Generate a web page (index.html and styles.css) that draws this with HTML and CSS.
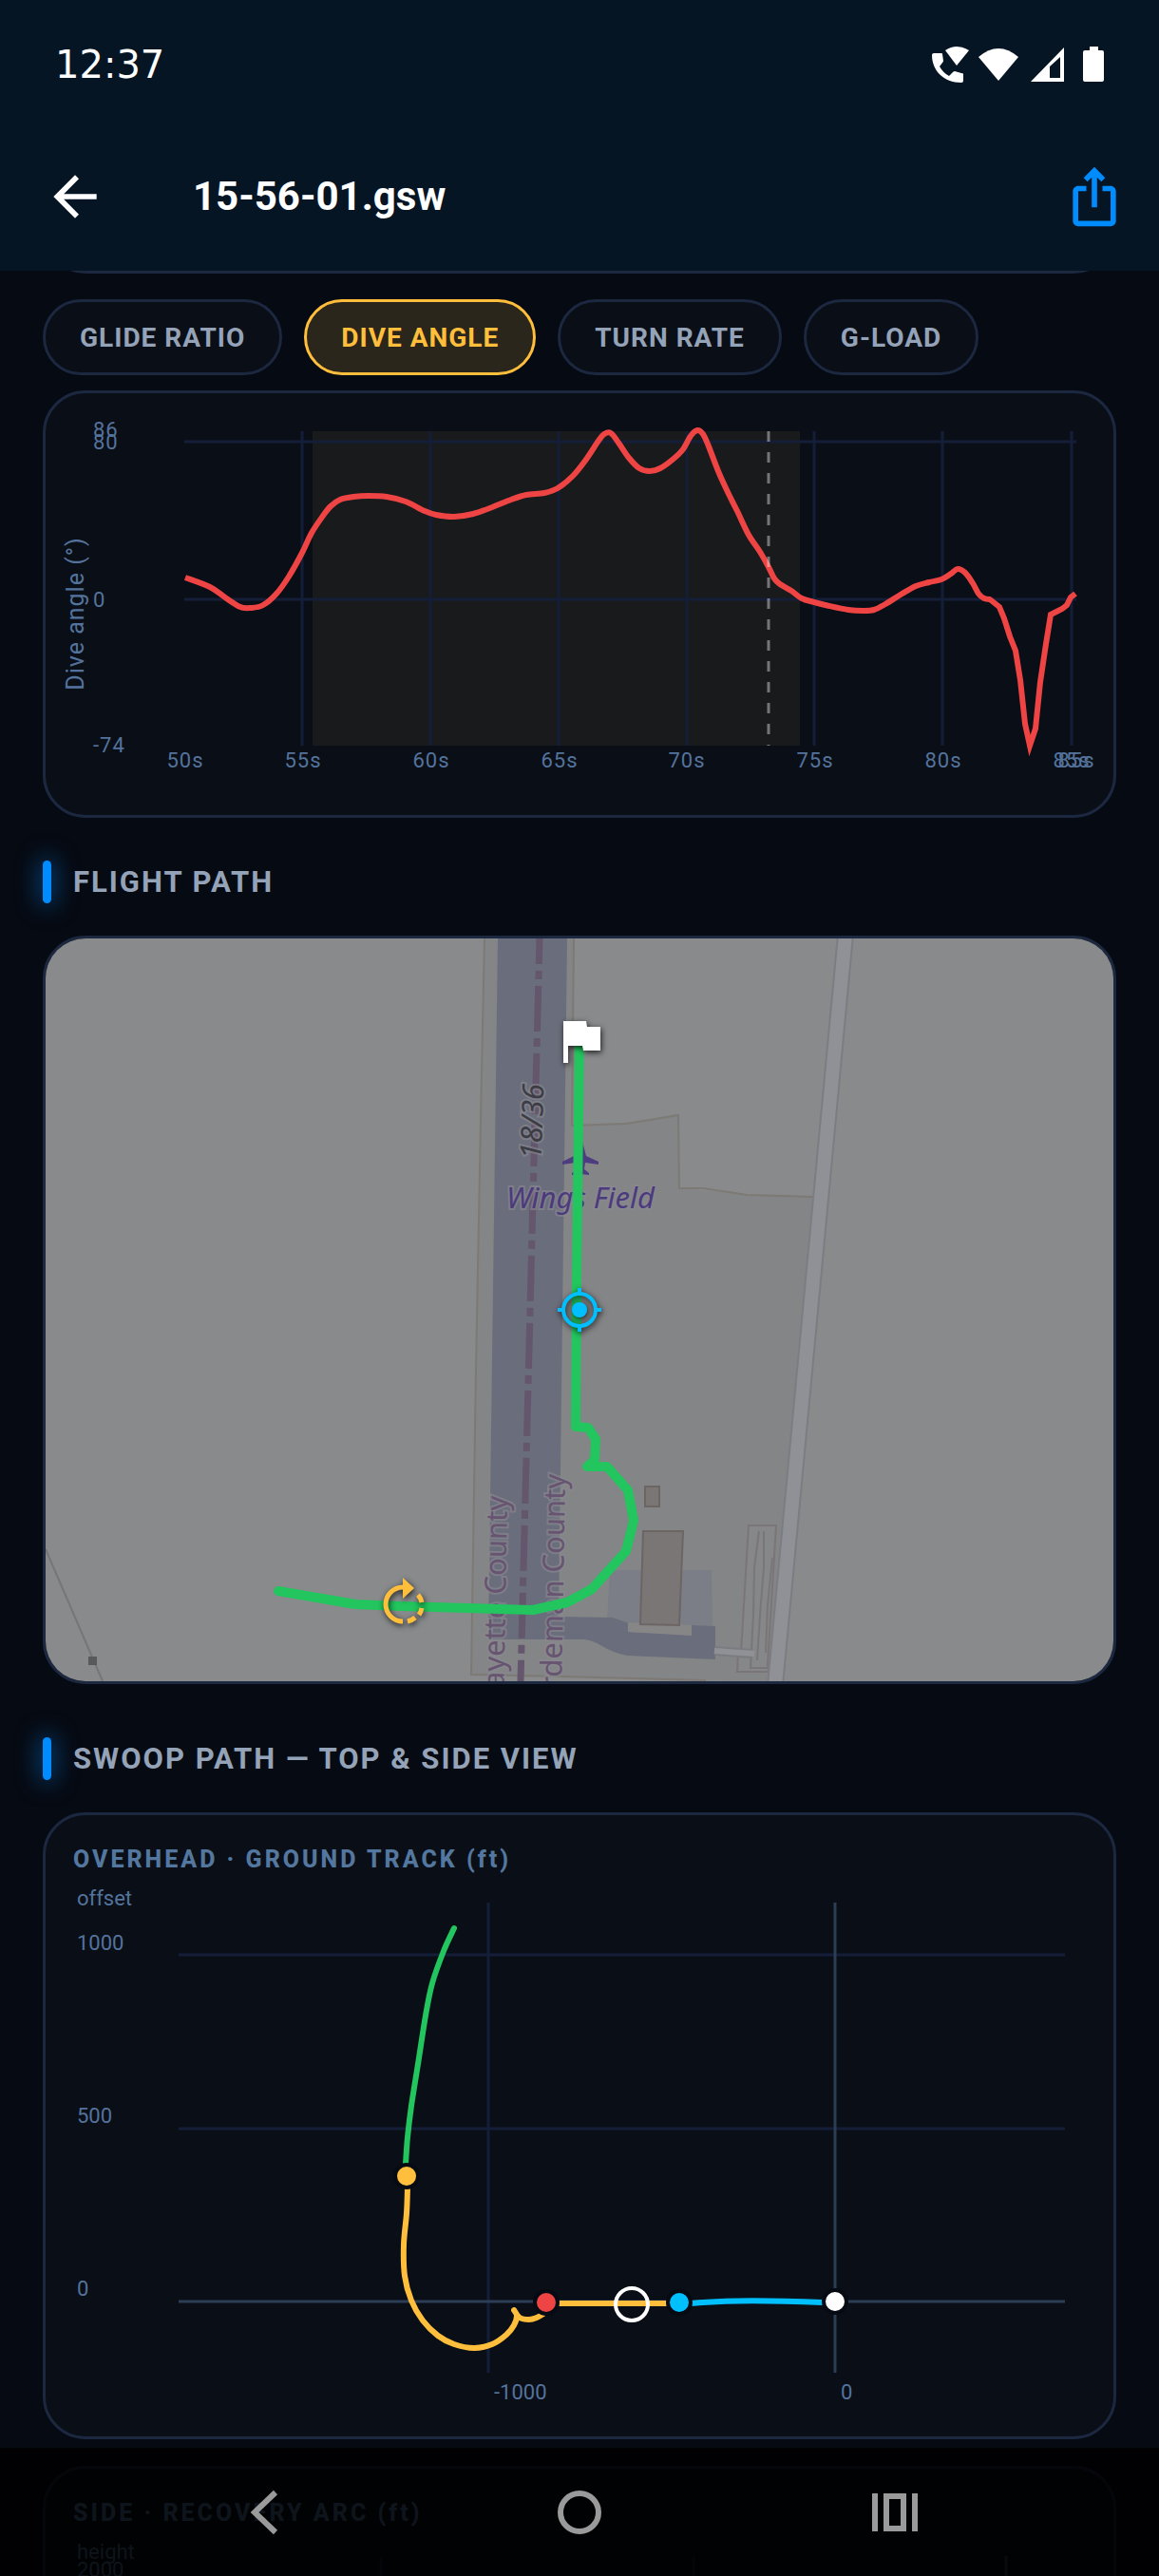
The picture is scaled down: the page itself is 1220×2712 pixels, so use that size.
FILE: index.html
```html
<!DOCTYPE html>
<html lang="en">

<head>
    <meta charset="UTF-8">
    <meta name="viewport" content="width=device-width, initial-scale=1.0">
    <title>15-56-01.gsw</title>
    <link rel="stylesheet" href="styles.css">
</head>

<body>
<div class="app">
    <header class="header">
        <div class="status-bar">
            <span class="clock">12:37</span>
            <svg class="status-icons" viewBox="0 0 184 44" aria-hidden="true">
                <path d="M4 10h8q1 0 1 1l1 7q0 1-1 2l-3 4q4 7 10 10l4-4q1-1 2-1l7 2q2 0 2 1v7q0 2-2 2C14 41 2 28 2 12q0-2 2-2z"/>
                <path d="M28 23L16 7q12-8 25 0z"/>
                <path d="M72 39L51 14q21-18 42 0z"/>
                <path d="M106 40L141 4v36zM126 24v12h11V14z" fill-rule="evenodd"/>
                <path d="M168 3h9v4h4q2 0 2 2v29q0 2-2 2h-18q-2 0-2-2V9q0-2 2-2h5z"/>
            </svg>
        </div>
        <div class="app-bar">
            <button type="button" class="icon-btn" aria-label="Back">
                <svg viewBox="0 0 24 24"><path d="M20 11H7.83l5.59-5.59L12 4l-8 8 8 8 1.41-1.41L7.83 13H20v-2z"/></svg>
            </button>
            <h1 class="page-title">15-56-01.gsw</h1>
            <button type="button" class="icon-btn share" aria-label="Share">
                <svg viewBox="0 0 24 24"><path d="M16 5l-1.42 1.42-1.59-1.59V16h-1.98V4.83L9.42 6.42 8 5l4-4 4 4zm4 5v11c0 1.1-.9 2-2 2H6c-1.11 0-2-.9-2-2V10c0-1.11.89-2 2-2h3v2H6v11h12V10h-3V8h3c1.1 0 2 .89 2 2z"/></svg>
            </button>
        </div>
    </header>

    <main class="content">
        <div class="card card-prev"></div>

        <div class="chips">
            <button type="button" class="chip">GLIDE RATIO</button>
            <button type="button" class="chip active">DIVE ANGLE</button>
            <button type="button" class="chip">TURN RATE</button>
            <button type="button" class="chip">G-LOAD</button>
        </div>

        <div class="card">
            <svg class="chart chart-time" viewBox="48 414 1124 444" role="img" aria-label="Dive angle over time">
                <rect class="swoop-band" x="329" y="454" width="513" height="331"/>
                <path class="grid" d="M194 465H1133M194 631H1133M318 454V785M453 454V785M588 454V785M723 454V785M857 454V785M992 454V785M1128 454V785"/>
                <polyline class="curve red smooth" points="195,608 221,618 237,629 253,639 264,640 277,637 291,625 304,607 318,582 328,561 340,543 348,533 358,526 372,523 388,522 407,523 427,528 447,538 459,542 478,544 498,541 518,534 538,526 554,521 573,519 587,514 603,501 616,485 630,464 636,457 643,456 651,466 662,482 673,493 684,496 695,493 709,483 719,473 727,459 734,453 740,457 746,470 756,496 766,518 776,538 788,563 800,581 809,597 815,609 821,615 833,622 844,630 857,634 873,638 893,642 908,643 920,642 932,636 948,626 964,617 978,613 991,610 1001,604 1008,599 1016,603 1024,614 1030,625 1036,630 1043,631"/>
                <polyline class="curve red" points="1042,631 1052,639 1057,651 1063,670 1069,685 1074,716 1079,762 1084,785 1090,767 1095,718 1101,678 1106,647 1112,644 1118,641 1123,637 1127,629 1132,625"/>
                <path class="cursor" d="M809 454V785"/>
                <g class="labels">
                    <text x="98" y="460">86</text>
                    <text x="98" y="473">80</text>
                    <text x="98" y="639">0</text>
                    <text x="98" y="792">-74</text>
                </g>
                <g class="labels middle">
                    <text x="195" y="808">50s</text>
                    <text x="319" y="808">55s</text>
                    <text x="454" y="808">60s</text>
                    <text x="589" y="808">65s</text>
                    <text x="723" y="808">70s</text>
                    <text x="858" y="808">75s</text>
                    <text x="993" y="808">80s</text>
                    <text x="1128" y="808">85s</text>
                    <text x="1133" y="808">85s</text>
                </g>
                <text class="axis-title" transform="translate(88 646) rotate(-90)">Dive angle (°)</text>
            </svg>
        </div>

        <h2 class="section-title">FLIGHT PATH</h2>

        <div class="card card-map">
            <svg class="chart" viewBox="48 988 1124 782" role="img" aria-label="Flight path map">
                <rect x="48" y="988" width="1124" height="782" fill="#888a8b"/>
                <path d="M510 988L507 1127L501 1441L496 1763L743 1769L817 1770L837 1550L855 1260L786 1258L715 1251L714 1174L659 1183L603 1185L604 988z" fill="#848586"/>
                <path class="parcel" d="M510 988L507 1127L501 1441L496 1763L590 1765L743 1769M604 988L602 1185L659 1183L690 1178L714 1174L715 1251L740 1251L786 1258L855 1260"/>
                <path d="M642 1653H749L750 1712L639 1707z" fill="#7b7d87"/>
                <path d="M524 988H597L588 1702L645 1703L662 1709L661 1718L728 1721V1711L753 1712V1747L660 1743Q645 1740 632 1732Q624 1727 615 1726H514z" fill="#6a6d7b"/>
                <path d="M661 1709L728 1711V1722L661 1718z" fill="#868686"/>
                <path d="M568 988L548 1770" fill="none" stroke="#64566c" stroke-width="7" stroke-dasharray="48 7 9 7" stroke-dashoffset="21"/>

                <!-- buildings and parking -->
                <path class="building" d="M677 1612H719L715 1711L674 1710z"/>
                <path class="building" d="M679 1565H694V1586H679z"/>
                <path d="M788 1606H817L808 1752L809 1760H776L777 1740H780z" fill="#868789" stroke="#7c7577" stroke-width="2"/>
                <path class="aisle" d="M799 1612L794 1650L793 1700L790 1756H812M804 1612V1650L800 1700L797 1748M813 1640L808 1690L806 1740"/>
                <path d="M752 1738L792 1741" fill="none" stroke="#7b7c82" stroke-width="10"/>
                <path d="M752 1738L794 1741" fill="none" stroke="#8f9195" stroke-width="6"/>
                <path d="M890 984L861 1294L837 1550L816 1774" fill="none" stroke="#7c7d83" stroke-width="18"/>
                <path d="M890 984L861 1294L837 1550L816 1774" fill="none" stroke="#8f9197" stroke-width="14"/>
                <path d="M48 1631L108 1770" fill="none" stroke="#757677" stroke-width="2"/>
                <rect x="93" y="1744" width="9" height="9" fill="#58595b"/>

                <path d="M613 1202L617 1217L630 1223V1226L616 1224L615 1231L620 1235V1237L611 1236L602 1237V1235L607 1231L606 1224L592 1226V1223L606 1216L609 1202z" fill="#4d3c80"/>
                <text class="map-text airfield" x="611" y="1272">Wings Field</text>
                <text class="map-text runway" transform="translate(571 1181) rotate(-88)">18/36</text>
                <text class="map-text county" transform="translate(534 1575) rotate(-89)">Fayette County</text>
                <text class="map-text county" transform="translate(595 1552) rotate(-89)">Hardeman County</text>

                <path class="track" d="M610 1090L607 1350L606 1502L619 1503L627 1515L626 1537L618 1544H639L661 1569L667 1601L659 1633L623 1673L597 1687L561 1695L423 1691L374 1689L293 1675"/>

                <g class="marker">
                    <path d="M593 1075H617L618 1081H632V1106H614L613 1101H598V1119H593z" fill="#fff"/>
                </g>
                <g class="marker" fill="none" stroke="#00bfff" stroke-width="4">
                    <circle cx="610" cy="1379" r="17"/>
                    <path d="M610 1356v6M610 1396v6M587 1379h6M627 1379h6"/>
                    <circle cx="610" cy="1379" r="8" fill="#00bfff" stroke="none"/>
                </g>
                <g class="marker" fill="none" stroke="#ffbf3c" stroke-width="5">
                    <path d="M424 1671A18 18 0 0 0 424 1707"/>
                    <path d="M440 1679A18 18 0 0 1 444 1687M444 1693A18 18 0 0 1 441 1700M437 1703A18 18 0 0 1 429 1707"/>
                    <path d="M424 1661L436 1672L424 1683z" fill="#ffbf3c" stroke="none"/>
                </g>
            </svg>
        </div>

        <h2 class="section-title">SWOOP PATH — TOP &amp; SIDE VIEW</h2>

        <div class="card card-view">
            <h3 class="card-title">OVERHEAD · GROUND TRACK (ft)</h3>
            <svg class="chart" viewBox="48 1973 1124 592" role="img" aria-label="Overhead ground track">
                <path class="grid" d="M188 2058H1121M188 2241H1121M514 2003V2498"/>
                <path class="axis" d="M188 2423H1121M879 2003V2498"/>
                <g class="labels plain">
                    <text x="81" y="2006">offset</text>
                    <text x="81" y="2053">1000</text>
                    <text x="81" y="2235">500</text>
                    <text x="81" y="2417">0</text>
                    <text x="520" y="2526">-1000</text>
                    <text x="885" y="2526">0</text>
                </g>
                <polyline class="curve green smooth" points="478,2030 467,2054 455,2088 448,2122 440,2173 433,2217 429,2250 427,2278"/>
                <polyline class="curve yellow smooth" points="429,2303 428,2330 425,2363 426,2396 433,2422 445,2443 461,2459 478,2468 499,2472 518,2468 533,2458 541,2448 544,2438 541,2432 547,2440 557,2442 565,2440 572,2436"/>
                <path class="curve yellow flat" d="M588 2425H702"/>
                <path class="curve blue flat" d="M728 2425Q772 2420 866 2424"/>
                <g class="points">
                    <circle cx="428" cy="2291" r="12" fill="#ffbf3c"/>
                    <circle cx="575" cy="2424" r="12" fill="#ef4444"/>
                    <circle cx="715" cy="2424" r="12" fill="#00bfff"/>
                    <circle cx="879" cy="2423" r="12" fill="#fff"/>
                </g>
                <circle cx="665" cy="2426" r="17" fill="none" stroke="#fff" stroke-width="4"/>
            </svg>
        </div>

        <div class="card card-view">
            <h3 class="card-title">SIDE · RECOVERY ARC (ft)</h3>
            <svg class="chart" viewBox="48 2662 1124 592" role="img" aria-label="Side recovery arc">
                <path class="grid" d="M401 2692V3187M730 2692V3187"/>
                <path class="axis" d="M1059 2692V3187"/>
                <g class="labels plain">
                    <text x="81" y="2695">height</text>
                    <text x="81" y="2714">2000</text>
                </g>
            </svg>
        </div>
    </main>

    <nav class="nav-bar">
        <button type="button" aria-label="Back"><svg viewBox="0 0 52 52"><path d="M38 5L16 26L38 47"/></svg></button>
        <button type="button" aria-label="Home"><svg viewBox="0 0 52 52"><circle cx="26" cy="26" r="20"/></svg></button>
        <button type="button" aria-label="Recent apps"><svg viewBox="0 0 52 52"><path d="M5 6V46M47 6V46M17 9H35V43H17z"/></svg></button>
    </nav>
</div>

<script>
    // turn the sampled polylines into smooth curves
    document.querySelectorAll('polyline.smooth').forEach(line => {
        const p = line.getAttribute('points').trim().split(/\s+/).map(s => s.split(',').map(Number));
        let d = `M${p[0]}`;

        for (let i = 0; i < p.length - 1; i++) {
            const a = p[i - 1] || p[i];
            const b = p[i];
            const c = p[i + 1];
            const e = p[i + 2] || c;
            d += `C${b[0] + (c[0] - a[0]) / 6},${b[1] + (c[1] - a[1]) / 6} ${c[0] - (e[0] - b[0]) / 6},${c[1] - (e[1] - b[1]) / 6} ${c}`;
        }

        const path = document.createElementNS('http://www.w3.org/2000/svg', 'path');
        path.setAttribute('class', line.getAttribute('class'));
        path.setAttribute('d', d);
        line.replaceWith(path);
    });
</script>
</body>

</html>
```

FILE: styles.css
```css
* {
    box-sizing: border-box;
}

body {
    margin: 0;
    background: #060a12;
    font-family: Roboto, "Liberation Sans", sans-serif;
    color: #fff;
}

h1, h2, h3 {
    margin: 0;
}

button {
    font-family: inherit;
    cursor: pointer;
}

.app {
    position: relative;
    display: flex;
    flex-direction: column;
    height: 100vh;
    overflow: hidden;
}

.header {
    flex: none;
    background: #051524;
}

.status-bar {
    display: flex;
    align-items: center;
    justify-content: space-between;
    height: 128px;
    padding: 8px 57px 0 58px;
}

.clock {
    font-family: "DejaVu Sans", sans-serif;
    font-size: 40px;
}

.status-icons {
    width: 184px;
    height: 44px;
    fill: #fff;
}

.app-bar {
    display: flex;
    align-items: center;
    height: 157px;
    padding: 0 34px 0 45px;
}

.icon-btn {
    display: flex;
    padding: 0;
    border: none;
    background: none;
    color: #fff;
}

.icon-btn svg {
    width: 68px;
    height: 68px;
    fill: currentColor;
}

.icon-btn.share {
    color: #008cff;
}

.page-title {
    flex: 1;
    padding-left: 90px;
    font-size: 42px;
    font-weight: 700;
}

.content {
    flex: 1;
    min-height: 0;
    overflow: hidden;
    padding: 0 45px;
}

.card {
    border: 3px solid #1c2740;
    border-radius: 45px;
    background: #0a0e17;
    overflow: hidden;
}

.card-prev {
    height: 100px;
    margin-top: -97px;
}

.chips {
    display: flex;
    gap: 23px;
    margin: 27px 0 16px;
}

.chip {
    height: 80px;
    padding: 0 36px;
    border: 3px solid #1c2740;
    border-radius: 40px;
    background: #0a0e17;
    color: #94a3b8;
    font-size: 28px;
    font-weight: 700;
    letter-spacing: 1px;
}

.chip.active {
    border-color: #ffbf3c;
    background: #2b261b;
    color: #ffbf3c;
}

.section-title {
    display: flex;
    align-items: center;
    gap: 23px;
    margin: 45px 0 34px;
    color: #94a3b8;
    font-size: 31px;
    line-height: 45px;
    font-weight: 700;
    letter-spacing: 2px;
}

.section-title::before {
    content: "";
    width: 9px;
    height: 45px;
    border-radius: 5px;
    background: #008cff;
    box-shadow: 0 0 24px 3px rgba(0, 140, 255, 0.5);
}

.card-map {
    margin-bottom: 56px;
}

.card-view {
    margin-bottom: 28px;
}

.card-title {
    padding: 32px 29px 0;
    color: #54779f;
    font-size: 25px;
    line-height: 30px;
    font-weight: 800;
    letter-spacing: 3px;
}

/* charts */

.chart {
    display: block;
    width: 100%;
    height: auto;
}

.swoop-band {
    fill: #191a1b;
}

.grid {
    fill: none;
    stroke: #141e38;
    stroke-width: 3;
}

.axis {
    fill: none;
    stroke: #2c3d56;
    stroke-width: 3;
}

.cursor {
    stroke: rgba(255, 255, 255, 0.4);
    stroke-width: 3;
    stroke-dasharray: 11 11;
}

.curve {
    fill: none;
    stroke-width: 6;
    stroke-linecap: round;
    stroke-linejoin: round;
}

.curve.flat {
    stroke-linecap: butt;
}

.curve.red {
    stroke: #ef4444;
    stroke-linecap: butt;
    stroke-linejoin: miter;
}

.green {
    stroke: #22c55e;
}

.yellow {
    stroke: #ffbf3c;
}

.blue {
    stroke: #00bfff;
}

.points circle {
    stroke: #060a12;
    stroke-width: 4;
}

.labels {
    fill: #54739c;
    font-size: 22px;
    letter-spacing: 1px;
}

.labels.plain {
    letter-spacing: 0;
}

.labels.middle {
    text-anchor: middle;
}

.axis-title {
    fill: #54739c;
    font-size: 25px;
    letter-spacing: 1px;
    text-anchor: middle;
}

/* map */

.parcel {
    fill: none;
    stroke: #7d7974;
    stroke-width: 2;
}

.building {
    fill: #7a7675;
    stroke: #6c6564;
    stroke-width: 2;
}

.aisle {
    fill: none;
    stroke: #797679;
    stroke-width: 2;
}

.map-text {
    font-family: "Noto Sans", sans-serif;
    font-size: 31px;
    paint-order: stroke;
    stroke: rgba(138, 138, 146, 0.6);
    stroke-width: 4;
}

.airfield {
    fill: #4b3a7d;
    font-style: italic;
    text-anchor: middle;
}

.runway {
    fill: #3b3c44;
    font-style: italic;
    text-anchor: middle;
}

.county {
    fill: #675470;
    text-anchor: end;
}

.track {
    fill: none;
    stroke: #22c55e;
    stroke-width: 10;
    stroke-linecap: round;
    stroke-linejoin: round;
}

.marker {
    filter: drop-shadow(1px 2px 3px rgba(0, 0, 0, 0.8));
}

/* system navigation, drawn over the page */

.nav-bar {
    position: absolute;
    left: 0;
    right: 0;
    bottom: 0;
    display: grid;
    grid-template-columns: repeat(3, 1fr);
    height: 135px;
    padding: 0 112px;
    background: rgba(0, 0, 0, 0.83);
}

.nav-bar button {
    display: flex;
    align-items: center;
    justify-content: center;
    padding: 0;
    border: none;
    background: none;
}

.nav-bar svg {
    width: 52px;
    height: 52px;
    fill: none;
    stroke: #9a9a9a;
    stroke-width: 6;
}
```
